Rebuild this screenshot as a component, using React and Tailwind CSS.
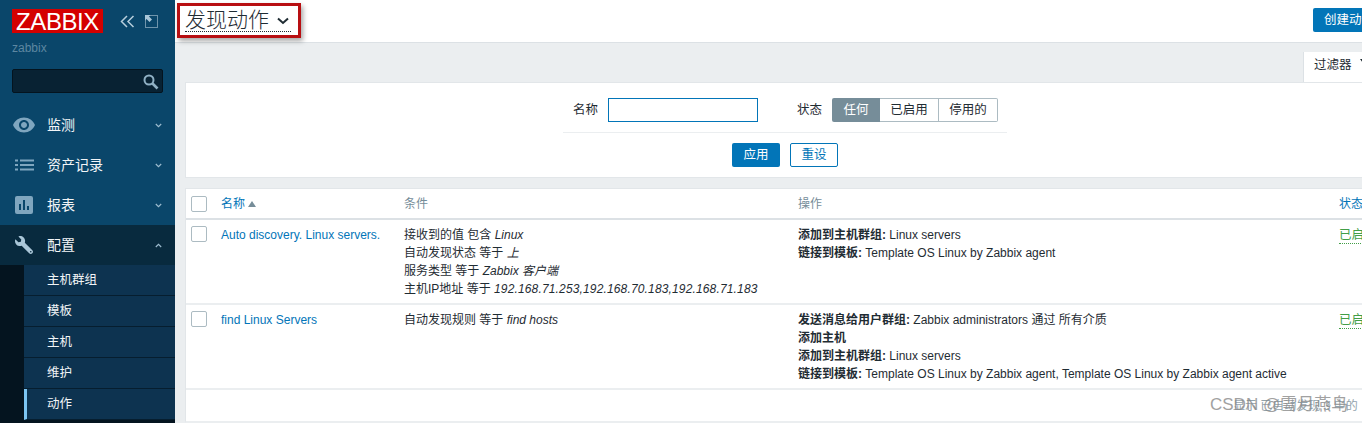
import React from "react";
import { FaWrench } from "react-icons/fa";
import { MdVisibility } from "react-icons/md";

const font = "font-['Liberation_Sans','Noto_Sans_CJK_SC',sans-serif]";

function Chevron({ up, className = "" }) {
  return (
    <svg width="7" height="5" viewBox="0 0 7 5" fill="none" className={className}>
      <path d={up ? "M0.8 4L3.5 1.4L6.2 4" : "M0.8 1L3.5 3.6L6.2 1"} stroke="#9dbccf" strokeWidth="1.2" />
    </svg>
  );
}

function ListIcon() {
  return (
    <svg width="19" height="12" viewBox="0 0 19 12" fill="#7fa6bf">
      <rect x="0" y="0.5" width="3" height="2" />
      <rect x="5" y="0.5" width="14" height="2" />
      <rect x="0" y="5" width="3" height="2" />
      <rect x="5" y="5" width="14" height="2" />
      <rect x="0" y="9.5" width="3" height="2" />
      <rect x="5" y="9.5" width="14" height="2" />
    </svg>
  );
}

function ChartIcon() {
  return (
    <svg width="18" height="18" viewBox="0 0 18 18">
      <rect width="18" height="18" rx="2" fill="#7fa6bf" />
      <rect x="4" y="8" width="2" height="6" fill="#0a466a" />
      <rect x="8" y="4" width="2" height="10" fill="#0a466a" />
      <rect x="12" y="10" width="2" height="4" fill="#0a466a" />
    </svg>
  );
}

function MenuRow({ icon, label, active }) {
  return (
    <div className={`h-10 flex items-center ${active ? "bg-[#082a3e]" : ""}`}>
      <div className="w-[47px] shrink-0 flex justify-center pl-[2px] pr-[1px]">
        <div className="w-[24px] flex justify-center">{icon}</div>
      </div>
      <span className="flex-1 text-[14px] text-[#f2f5f7]">{label}</span>
      <Chevron up={active} className="mr-[13px]" />
    </div>
  );
}

function SubRow({ label, active }) {
  return (
    <div className={`h-[31px] flex items-center bg-[#0d3350] border-b-[1px] border-[#061e2f] pl-[23px] text-[12.5px] text-[#f2f5f7] ${active ? "border-l-[3px] border-l-[#7cc5f2] !pl-[20px]" : ""}`}>
      {label}
    </div>
  );
}

function Sidebar() {
  return (
    <aside className="w-[175px] shrink-0 h-full bg-[#0a466a] flex flex-col">
      <div className="pl-3 pt-[9px] flex items-center h-[33px]">
        <div className="w-[91px] h-6 bg-[#d40000] text-white text-[24px] leading-[25px] tracking-[-0.4px] text-center font-['Liberation_Sans',sans-serif]">ZABBIX</div>
        <svg width="15" height="13" viewBox="0 0 15 13" fill="none" className="ml-[17px]" stroke="#b7cedc" strokeWidth="1.5">
          <path d="M7 1L1.5 6.5L7 12" />
          <path d="M13.5 1L8 6.5L13.5 12" />
        </svg>
        <svg width="13" height="13" viewBox="0 0 13 13" className="ml-[10px]" fill="none">
          <rect x="0.5" y="0.5" width="12" height="12" stroke="#d5e3ec" strokeDasharray="1 1" />
          <path d="M0 0H5.5L4 1.5L7 4.5L4.5 7L1.5 4L0 5.5Z" fill="#a9c6d8" />
        </svg>
      </div>
      <div className="pl-3 mt-2 text-[12px] leading-[14px] text-[#5d87a1]">zabbix</div>
      <div className="mx-3 mt-[14px] h-6 bg-[#082233] border border-[#04141f] rounded-[2px] flex items-center justify-end pr-[3px]">
        <svg width="17" height="17" viewBox="0 0 17 17" fill="none" stroke="#8fb0c4" strokeWidth="2">
          <circle cx="7" cy="7" r="4.5" />
          <path d="M10.5 10.5L15.5 15.5" strokeWidth="2.6" />
        </svg>
      </div>
      <div className="mt-3">
        <MenuRow label="监测" icon={<MdVisibility size={26} color="#7fa6bf" />} />
        <MenuRow label="资产记录" icon={<ListIcon />} />
        <MenuRow label="报表" icon={<ChartIcon />} />
        <MenuRow label="配置" active icon={<FaWrench size={18} color="#a9c6d8" className="-scale-x-100" />} />
      </div>
      <div className="flex-1 bg-[#04141f] pl-6">
        <SubRow label="主机群组" />
        <SubRow label="模板" />
        <SubRow label="主机" />
        <SubRow label="维护" />
        <SubRow label="动作" active />
      </div>
    </aside>
  );
}

function Header() {
  return (
    <header className="h-[43px] shrink-0 bg-white border-b border-[#dce1e5] flex items-start justify-between pl-[2px] pr-[10px]">
      <div className="mt-[3px] w-[124px] h-[35px] border-[3px] border-[#b80f12] shadow-[2px_3px_5px_rgba(0,0,0,0.35)] pl-[5px]">
        <div className="w-[106px] h-[26px] border-b border-dotted border-[#1f2c33] flex items-center gap-[8px]">
          <span className="text-[21px] leading-[26px] mt-[2px] text-[#1f2c33] font-light whitespace-nowrap">发现动作</span>
          <svg width="12" height="8" viewBox="0 0 12 8" fill="none" stroke="#1f2c33" strokeWidth="2" className="mt-[5px]">
            <path d="M1 1.5L6 6L11 1.5" />
          </svg>
        </div>
      </div>
      <div className="mt-2 w-[72px] h-6 bg-[#0275b8] rounded-[2px] text-white text-[12.5px] leading-6 text-center">创建动作</div>
    </header>
  );
}

function Filter() {
  return (
    <section className="mx-[10px]">
      <div className="flex justify-end h-[30px] mt-[9px] pr-[10px]">
        <div className="w-[72px] bg-white border-l border-[#dce1e5] pl-[10px] text-[12.5px] leading-[26px] text-[#1f2c33] flex">
          过滤器
          <svg width="8" height="8" viewBox="0 0 8 8" fill="#1f2c33" className="ml-[8px] mt-[7px] shrink-0">
            <path d="M0 0H8L5 4V8L3 7V4Z" />
          </svg>
        </div>
      </div>
      <div className="h-[96px] bg-white border border-[#e2e6e9] flex flex-col items-center pt-[15px]">
        <div className="w-[444px] h-[35px] border-b border-[#ebeef0] flex items-start text-[12.5px] text-[#1f2c33]">
          <span className="ml-[10px] leading-6">名称</span>
          <div className="ml-[10px] w-[150px] h-6 border border-[#0275b8] bg-white"></div>
          <span className="ml-[39px] leading-6">状态</span>
          <div className="ml-[10px] h-6 flex leading-[22px] text-center">
            <div className="w-[48px] bg-[#768d99] text-white rounded-l-[2px] leading-6">任何</div>
            <div className="w-[59px] border-y border-r border-[#acbbc2]">已启用</div>
            <div className="w-[59px] border-y border-r border-[#acbbc2] rounded-r-[2px]">停用的</div>
          </div>
        </div>
        <div className="flex gap-[10px] mt-[10px] text-[12.5px]">
          <div className="w-[48px] h-6 bg-[#0275b8] text-white rounded-[2px] text-center leading-6">应用</div>
          <div className="w-[48px] h-6 border border-[#0275b8] text-[#0275b8] rounded-[2px] text-center leading-[22px]">重设</div>
        </div>
      </div>
    </section>
  );
}

function Check() {
  return <div className="w-4 h-4 bg-white border border-[#acbbc2] rounded-[2px]"></div>;
}

function B({ children }) {
  return <span className="font-bold">{children}</span>;
}
function I({ children, wide }) {
  return <i className={`italic ${wide ? "tracking-[0.15px]" : ""}`}>{children}</i>;
}

function Row({ name, conditions, ops }) {
  return (
    <div className="flex h-[85px] border-b-2 border-[#ebeef0] text-[12px] leading-[18px] text-[#1f2c33]">
      <div className="w-[35px] pl-[5px] pt-[6px] shrink-0"><Check /></div>
      <div className="w-[183px] shrink-0 text-[#0275b8] pt-[6px]">{name}</div>
      <div className="w-[394px] shrink-0 pt-[6px]">{conditions}</div>
      <div className="w-[541px] shrink-0 pt-[6px]">{ops}</div>
      <div className="pt-[6px]">
        <span className="text-[#429e47] border-b border-dotted border-[#429e47] text-[12.5px] leading-[15px] inline-block">已启用</span>
      </div>
    </div>
  );
}

function Table() {
  return (
    <section className="mx-[10px] mt-[10px] bg-white flex-1 border-l border-[#e2e6e9] border-t border-b-2 border-b-[#ebeef0]">
      <div className="h-[31px] border-b-2 border-[#dce1e5] flex items-center text-[12px]">
        <div className="w-[35px] pl-[5px] shrink-0"><Check /></div>
        <div className="w-[183px] shrink-0 text-[#0275b8] flex items-center gap-[3px]">
          名称
          <svg width="8" height="6" viewBox="0 0 8 6" fill="#768d99"><path d="M4 0L8 6H0Z" /></svg>
        </div>
        <div className="w-[394px] shrink-0 text-[#768d99]">条件</div>
        <div className="w-[541px] shrink-0 text-[#768d99]">操作</div>
        <div className="text-[#0275b8] whitespace-nowrap">状态</div>
      </div>
      <Row
        name="Auto discovery. Linux servers."
        conditions={
          <>
            <div>接收到的值 包含 <I>Linux</I></div>
            <div>自动发现状态 等于 <I>上</I></div>
            <div>服务类型 等于 <I>Zabbix 客户端</I></div>
            <div>主机IP地址 等于 <I wide>192.168.71.253,192.168.70.183,192.168.71.183</I></div>
          </>
        }
        ops={
          <>
            <div><B>添加到主机群组:</B> Linux servers</div>
            <div><B>链接到模板:</B> Template OS Linux by Zabbix agent</div>
          </>
        }
      />
      <Row
        name="find Linux Servers"
        conditions={<div>自动发现规则 等于 <I>find hosts</I></div>}
        ops={
          <>
            <div><B>发送消息给用户群组:</B> Zabbix administrators 通过 所有介质</div>
            <div><B>添加主机</B></div>
            <div><B>添加到主机群组:</B> Linux servers</div>
            <div><B>链接到模板:</B> Template OS Linux by Zabbix agent, Template OS Linux by Zabbix agent active</div>
          </>
        }
      />
    </section>
  );
}

export default function App() {
  return (
    <div className={`relative w-[1362px] h-[423px] overflow-hidden flex bg-[#ebeef0] ${font}`}>
      <Sidebar />
      <main className="w-[1220px] shrink-0 h-full flex flex-col">
        <Header />
        <Filter />
        <Table />
      </main>
      <div className="absolute left-[1233px] top-[398px] text-[12px] leading-4 text-[#768d99] whitespace-nowrap opacity-80">显示 已自动发现 3 中的</div>
      <div className="absolute left-[1210px] top-[395px] text-[17px] leading-5 text-[#8a8a8a] opacity-80 whitespace-nowrap">CSDN @雪月燕鸟</div>
    </div>
  );
}
